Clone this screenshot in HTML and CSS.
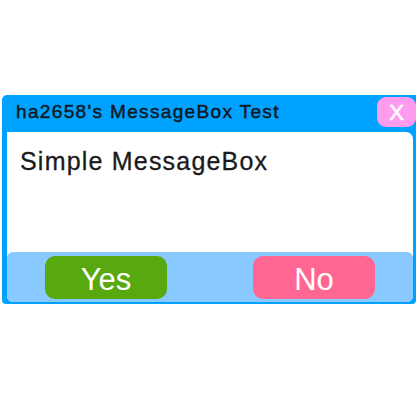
FILE: index.html
```html
<!DOCTYPE html>
<html>
<head>
<meta charset="utf-8">
<link rel="stylesheet" href="styles.css">
</head>
<body>
<div class="window">
  <div class="titlebar">
    <span class="title">ha2658's MessageBox Test</span>
    <span class="close">X</span>
  </div>
  <div class="panel">
    <div class="message">Simple MessageBox</div>
    <div class="bar">
      <span class="btn yes">Yes</span>
      <span class="btn no">No</span>
    </div>
  </div>
</div>
</body>
</html>
```
FILE: styles.css
```css
html, body {
  margin: 0;
  padding: 0;
  background: #ffffff;
}
body {
  width: 420px;
  height: 420px;
  overflow: hidden;
  font-family: "Liberation Sans", Arial, sans-serif;
}
.window {
  margin: 95px 0 0 2px;
  width: 414px;
  height: 209px;
  background: #00a2ff;
  border-radius: 5px 0 4px 4px;
  display: flex;
  flex-direction: column;
}
.titlebar {
  height: 37px;
  display: flex;
  align-items: flex-start;
  justify-content: space-between;
}
.title {
  margin: 6px 0 0 14px;
  font-size: 19px;
  line-height: 22px;
  letter-spacing: 1.35px;
  color: #0e1a26;
  -webkit-text-stroke: 0.5px #0e1a26;
}
.close {
  margin-top: 2px;
  width: 39px;
  height: 30px;
  border-radius: 9px;
  background: #ff9cf0;
  color: #ffffff;
  font-size: 22px;
  line-height: 31px;
  text-align: center;
  -webkit-text-stroke: 0.6px #ffffff;
}
.panel {
  margin: 0 3px 2px 5px;
  flex: 1;
  background: #ffffff;
  border-radius: 0 7px 6px 6px;
  display: flex;
  flex-direction: column;
}
.message {
  flex: 1;
  padding: 14px 0 0 13px;
  font-size: 25px;
  line-height: 30px;
  letter-spacing: 1.2px;
  color: #1a1a1a;
  -webkit-text-stroke: 0.3px #1a1a1a;
}
.bar {
  height: 50px;
  background: #88caff;
  border-radius: 6px;
  display: flex;
  align-items: center;
  gap: 86px;
  padding-left: 38px;
}
.btn {
  width: 122px;
  height: 43px;
  border-radius: 10px;
  color: #ffffff;
  font-size: 31px;
  line-height: 47px;
  text-align: center;
}
.yes { background: #58a80f; }
.no { background: #ff6692; }
```
